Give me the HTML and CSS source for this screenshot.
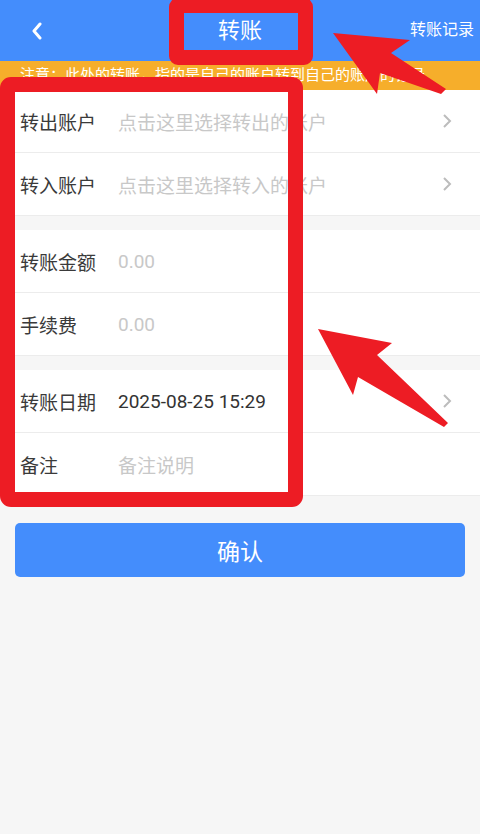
FILE: index.html
```html
<!DOCTYPE html>
<html lang="zh-CN">
<head>
    <meta charset="UTF-8">
    <meta name="viewport" content="width=device-width, initial-scale=1.0">
    <title>转账</title>
    <link rel="stylesheet" href="styles.css">
</head>
<body>
    <div class="page">
        <header class="topbar">
            <div class="topbar-left">
                <svg class="back-icon" width="12" height="18" viewBox="0 0 12 18">
                    <path d="M9 2 L3 9 L9 16" fill="none" stroke="#fff" stroke-width="3" stroke-linecap="round" stroke-linejoin="round"/>
                </svg>
            </div>
            <div class="topbar-title">转账</div>
            <div class="topbar-right">转账记录</div>
        </header>

        <div class="notice">注意：此处的转账，指的是自己的账户转到自己的账户的记录</div>

        <div class="group">
            <div class="row">
                <span class="label">转出账户</span>
                <span class="value placeholder">点击这里选择转出的账户</span>
                <svg class="arrow" width="10" height="16" viewBox="0 0 10 16"><path d="M2 2 L8 8 L2 14" fill="none" stroke="#bcbcbc" stroke-width="2"/></svg>
            </div>
            <div class="row">
                <span class="label">转入账户</span>
                <span class="value placeholder">点击这里选择转入的账户</span>
                <svg class="arrow" width="10" height="16" viewBox="0 0 10 16"><path d="M2 2 L8 8 L2 14" fill="none" stroke="#bcbcbc" stroke-width="2"/></svg>
            </div>
        </div>

        <div class="group">
            <div class="row">
                <span class="label">转账金额</span>
                <span class="value placeholder num">0.00</span>
            </div>
            <div class="row">
                <span class="label">手续费</span>
                <span class="value placeholder num">0.00</span>
            </div>
        </div>

        <div class="group">
            <div class="row">
                <span class="label">转账日期</span>
                <span class="value num">2025-08-25 15:29</span>
                <svg class="arrow" width="10" height="16" viewBox="0 0 10 16"><path d="M2 2 L8 8 L2 14" fill="none" stroke="#bcbcbc" stroke-width="2"/></svg>
            </div>
            <div class="row">
                <span class="label">备注</span>
                <span class="value placeholder">备注说明</span>
            </div>
        </div>

        <div class="actions">
            <button type="button" class="confirm-btn">确认</button>
        </div>

        <!-- red markup drawn on top of the form -->
        <div class="mark mark-title"></div>
        <div class="mark mark-form"></div>
        <svg class="mark-arrows" width="480" height="834" viewBox="0 0 480 834">
            <polygon points="333,33 410,40 391,53 446,89 441,94 380,73 377,94" fill="#ed1c24"/>
            <polygon points="318,329 392,343 377,355 448,423 444,427 358,377 353,395" fill="#ed1c24"/>
        </svg>
    </div>
</body>
</html>
```

FILE: styles.css
```css
body {
    margin: 0;
    background-color: #f6f6f6;
    font-family: Roboto, "Noto Sans CJK SC", sans-serif;
}
.page {
    position: relative;
    width: 480px;
    min-height: 834px;
    overflow: hidden;
}
.topbar {
    height: 61px;
    background-color: #448dfc;
    display: grid;
    grid-template-columns: 1fr auto 1fr;
    align-items: center;
    color: #fff;
}
.topbar-left {
    padding-left: 31px;
    display: flex;
    align-items: center;
}
.topbar-title {
    font-size: 22px;
    line-height: 30px;
}
.topbar-right {
    text-align: right;
    padding: 0 6px 5px 0;
    font-size: 16px;
}
.notice {
    height: 29px;
    line-height: 29px;
    background-color: #f6ae2b;
    color: #fff;
    font-size: 15px;
    padding-left: 20px;
    white-space: nowrap;
    overflow: hidden;
}
.group {
    background-color: #fff;
    margin-bottom: 14px;
}
.row {
    height: 62px;
    display: flex;
    align-items: center;
    padding: 0 28px 0 20px;
    border-bottom: 1px solid #ececec;
    font-size: 19px;
}
.label {
    width: 98px;
    color: #3a3a3a;
}
.value {
    flex: 1;
    color: #333;
}
.value.placeholder {
    color: #c8c8c8;
}
.arrow {
    flex-shrink: 0;
}
.actions {
    padding: 13px 15px;
}
.confirm-btn {
    width: 100%;
    height: 54px;
    border: none;
    border-radius: 5px;
    background-color: #448dfc;
    color: #fff;
    font-family: "Noto Sans CJK SC", sans-serif;
    font-size: 23px;
}
.mark {
    position: absolute;
    border: 15px solid #ed1c24;
    border-radius: 9px;
    box-sizing: border-box;
}
.mark-title {
    left: 169px;
    top: -2px;
    width: 144px;
    height: 67px;
}
.mark-form {
    left: 0;
    top: 77px;
    width: 303px;
    height: 430px;
    border-radius: 11px;
}
.mark-arrows {
    position: absolute;
    left: 0;
    top: 0;
    pointer-events: none;
}
```
